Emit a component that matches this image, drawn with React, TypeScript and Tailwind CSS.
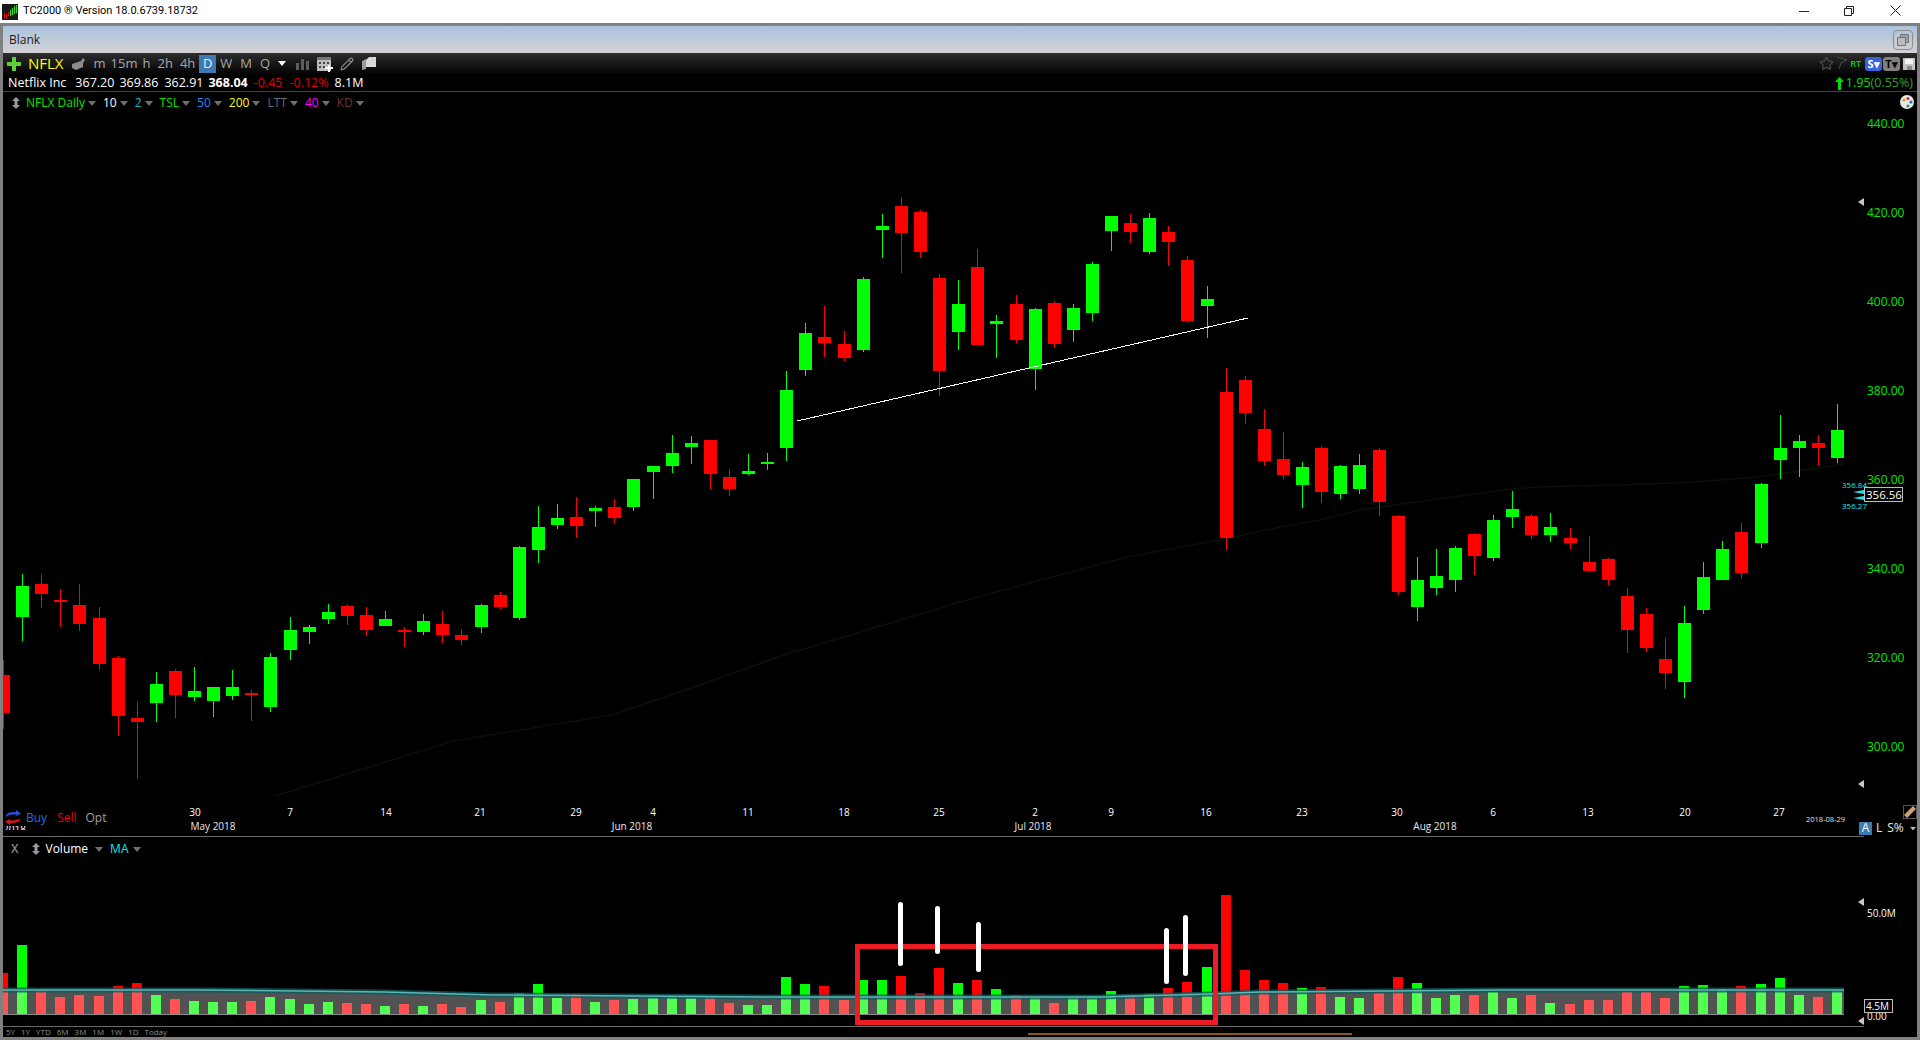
import * as React from "react";
import { Pencil, Star } from "lucide-react";

type Row = [string, number, number, number, number, number];
interface Candle {
    up: boolean;
    x: number;
    wickTop: number;
    bodyTop: number;
    bodyBottom: number;
    wickBottom: number;
}

// rows were read off 3x crops: [colour, x, wick top, body top, body bottom, wick bottom]
const groups: { ox: number; oy: number; rows: Row[] }[] = [
    {
        ox: 0,
        oy: 560,
        rows: [
            ["r", 10, 300, 345, 459, 507],
            ["g", 67, 42, 78, 171, 243],
            ["r", 124, 42, 72, 102, 144],
            ["r", 181, 87, 120, 126, 201],
            ["r", 238, 72, 135, 192, 213],
            ["r", 298, 141, 174, 312, 330],
            ["r", 355, 288, 294, 468, 528],
            ["r", 412, 426, 474, 486, 657],
            ["g", 469, 336, 372, 429, 486],
            ["r", 526, 327, 333, 405, 474],
            ["g", 583, 321, 393, 411, 423],
            ["g", 640, 381, 381, 423, 471],
            ["g", 697, 330, 381, 408, 420],
            ["r", 754, 390, 399, 405, 483],
            ["g", 811, 279, 291, 441, 456],
            ["g", 871, 171, 210, 270, 300],
            ["g", 928, 195, 201, 216, 252],
            ["g", 985, 132, 156, 177, 192],
            ["r", 1042, 132, 138, 168, 195],
            ["r", 1099, 141, 165, 210, 228],
            ["g", 1156, 153, 177, 198, 198],
            ["r", 1213, 201, 210, 216, 261],
            ["g", 1270, 162, 183, 216, 225],
            ["r", 1327, 153, 192, 225, 249],
            ["r", 1384, 207, 225, 240, 255],
            ["g", 1444, 132, 135, 201, 219],
            ["r", 1501, 96, 105, 141, 147],
        ],
    },
    {
        ox: 480,
        oy: 340,
        rows: [
            ["g", 118, 618, 621, 834, 840],
            ["g", 175, 498, 561, 630, 669],
            ["g", 232, 492, 534, 555, 567],
            ["r", 289, 471, 531, 558, 594],
            ["g", 346, 498, 504, 513, 561],
            ["r", 403, 477, 501, 534, 549],
            ["g", 460, 417, 417, 501, 513],
            ["g", 520, 378, 378, 396, 477],
            ["g", 577, 285, 339, 378, 399],
            ["g", 634, 288, 309, 321, 372],
            ["r", 691, 300, 300, 402, 447],
            ["r", 748, 387, 411, 447, 468],
            ["g", 805, 342, 393, 402, 405],
            ["g", 862, 339, 366, 372, 390],
            ["g", 919, 93, 150, 324, 363],
        ],
    },
    {
        ox: 780,
        oy: 180,
        rows: [
            ["g", 76, 429, 459, 570, 588],
            ["r", 133, 378, 471, 489, 531],
            ["r", 193, 453, 492, 534, 543],
            ["g", 250, 291, 297, 510, 516],
            ["g", 307, 102, 138, 150, 234],
            ["r", 364, 51, 78, 159, 279],
            ["r", 421, 90, 96, 216, 234],
            ["r", 478, 282, 294, 573, 648],
            ["g", 535, 300, 372, 456, 510],
            ["r", 592, 207, 261, 495, 495],
            ["g", 649, 405, 423, 432, 534],
            ["r", 709, 345, 372, 480, 489],
            ["g", 766, 384, 387, 567, 630],
            ["r", 823, 363, 369, 492, 504],
            ["g", 880, 372, 384, 450, 486],
            ["g", 937, 246, 252, 399, 423],
            ["g", 994, 108, 108, 153, 213],
            ["r", 1051, 102, 129, 156, 189],
            ["g", 1108, 99, 114, 216, 222],
            ["r", 1165, 138, 156, 186, 258],
            ["r", 1222, 228, 240, 423, 429],
            ["g", 1282, 318, 357, 378, 474],
        ],
    },
    {
        ox: 1220,
        oy: 380,
        rows: [
            ["r", 19, -36, 36, 473, 510],
            ["r", 76, -12, 0, 99, 132],
            ["r", 133, 87, 147, 243, 258],
            ["r", 190, 156, 237, 285, 297],
            ["g", 247, 246, 261, 315, 384],
            ["r", 304, 198, 204, 336, 369],
            ["g", 361, 255, 258, 342, 357],
            ["g", 418, 222, 255, 327, 342],
            ["r", 478, 204, 210, 366, 408],
            ["r", 535, 405, 408, 636, 645],
            ["g", 592, 531, 600, 681, 723],
            ["g", 649, 507, 588, 624, 645],
            ["g", 706, 498, 504, 600, 636],
            ["r", 763, 459, 462, 528, 585],
            ["g", 820, 405, 420, 534, 543],
            ["g", 877, 333, 387, 411, 444],
            ["r", 934, 402, 408, 465, 477],
            ["g", 991, 399, 441, 465, 486],
            ["r", 1051, 444, 474, 489, 507],
            ["r", 1108, 468, 546, 573, 576],
            ["r", 1165, 534, 537, 600, 615],
        ],
    },
    {
        ox: 1560,
        oy: 400,
        rows: [
            ["r", 202, 564, 588, 690, 759],
            ["r", 259, 624, 642, 744, 756],
            ["r", 316, 714, 777, 819, 867],
            ["g", 373, 618, 669, 846, 894],
            ["g", 430, 486, 531, 630, 642],
            ["g", 487, 423, 447, 540, 540],
            ["r", 544, 369, 396, 519, 537],
            ["g", 604, 249, 252, 429, 444],
            ["g", 661, 45, 144, 180, 237],
            ["g", 718, 105, 123, 144, 231],
            ["r", 775, 105, 129, 144, 198],
            ["g", 832, 12, 90, 174, 189],
        ],
    },
];

const candles: Candle[] = groups.flatMap((g) =>
    g.rows.map(([c, z, wt, bt, bb, wb]) => ({
        up: c === "g",
        x: g.ox + Math.floor(z / 3),
        wickTop: g.oy + Math.round(wt / 3),
        bodyTop: g.oy + Math.round(bt / 3),
        bodyBottom: g.oy + Math.round(bb / 3),
        wickBottom: g.oy + Math.round(wb / 3),
    })),
);

// top of each volume bar, one per candle, base is y=1015
const volumeTops = [
    973, 945, 991, 997, 995, 996, 986, 983, 995, 999, 1001, 1002, 1002, 1001, 997, 999, 1004, 1002, 1003, 1004, 1006,
    1004, 1006, 1004, 1007, 1000, 1002, 993, 984, 998, 994, 1002, 1000, 999, 998, 997, 998, 997, 1003, 1005, 1005, 977,
    984, 986, 1000, 980, 980, 976, 993, 968, 983, 980, 989, 995, 997, 1003, 997, 996, 991, 995, 994, 988, 982, 967, 895,
    970, 980, 983, 988, 987, 997, 998, 993, 977, 983, 998, 995, 995, 992, 998, 995, 1003, 1004, 1000, 1000, 992, 992,
    998, 986, 985, 989, 986, 984, 978, 995, 997, 991,
];

const priceLabels = [
    ["440.00", 128],
    ["420.00", 217],
    ["400.00", 306],
    ["380.00", 395],
    ["360.00", 484],
    ["340.00", 573],
    ["320.00", 662],
    ["300.00", 751],
] as const;

const dayLabels = [
    ["30", 195],
    ["7", 290],
    ["14", 386],
    ["21", 480],
    ["29", 576],
    ["4", 653],
    ["11", 748],
    ["18", 844],
    ["25", 939],
    ["2", 1035],
    ["9", 1111],
    ["16", 1206],
    ["23", 1302],
    ["30", 1397],
    ["6", 1493],
    ["13", 1588],
    ["20", 1685],
    ["27", 1779],
] as const;

const monthLabels = [
    ["May 2018", 213],
    ["Jun 2018", 632],
    ["Jul 2018", 1033],
    ["Aug 2018", 1435],
] as const;

const maLine =
    "M3 990 L200 990 L384 992 L493 995 L768 997 L1100 997 L1210 994 L1260 992 L1500 990 L1844 990";

const longMa =
    "M275 796 L360 770 L453 741 L612 715 L700 685 L784 655 L967 600 L1127 557 L1224 539 L1280 527 L1320 520 L1360 510 L1387 506 L1453 497 L1503 490 L1537 487 L1620 485 L1693 482 L1760 477 L1843 464";

const markers = [
    [898, 902, 64],
    [935, 906, 48],
    [976, 922, 50],
    [1164, 928, 56],
    [1183, 915, 61],
];

const Caret = ({ className = "" }: { className?: string }) => (
    <svg width="8" height="5" viewBox="0 0 8 5" className={className}>
        <path d="M0 0H8L4 5Z" fill="currentColor" />
    </svg>
);

const UpDown = () => (
    <svg width="8" height="12" viewBox="0 0 8 12">
        <path d="M4 0L8 4H5.5V8H8L4 12L0 8H2.5V4H0Z" fill="#9a9a9a" />
    </svg>
);

const LegendItem = ({ label, color }: { label: string; color: string }) => (
    <div className="flex items-center gap-[3px]">
        <span className={color}>{label}</span>
        <Caret className="text-[#6f6f6f]" />
    </div>
);

const PriceChart = () => (
    <svg viewBox="3 92 1914 745" width="1914" height="745" className="block">
        <path d={longMa} fill="none" stroke="#051405" strokeWidth="1.5" />
        {candles.map((c, i) => {
            const color = c.up ? "#00ff00" : "#ff0000";
            return (
                <g key={i} fill={color} shapeRendering="crispEdges">
                    <rect x={c.x} y={c.wickTop} width="1" height={c.wickBottom - c.wickTop} />
                    <rect x={c.x - 6} y={c.bodyTop} width="13" height={c.bodyBottom - c.bodyTop} />
                </g>
            );
        })}
        <line x1="797" y1="421" x2="1248" y2="318" stroke="#fff" strokeWidth="1" shapeRendering="crispEdges" />

        {priceLabels.map(([t, y]) => (
            <text key={t} x="1867" y={y} fontSize="12" fill="#00e800">
                {t}
            </text>
        ))}
        <path d="M1858 202l6-4v8Z M1858 784l6-4v8Z" fill="#c8c8c8" />

        <path d="M1853 492L1864 490V494Z M1853 498L1864 496V500Z" fill="#19e6f0" />
        <text x="1842" y="488" fontSize="8" fill="#19e6f0">
            356.84
        </text>
        <text x="1842" y="509" fontSize="8" fill="#19e6f0">
            356.27
        </text>
        <rect x="1864.5" y="487.5" width="38" height="14" fill="#000" stroke="#bdbdbd" />
        <text x="1866" y="499" fontSize="11.5" fill="#fff">
            356.56
        </text>

        {dayLabels.map(([t, x]) => (
            <text key={`${t}-${x}`} x={x} y="816" fontSize="10" fill="#fff" textAnchor="middle">
                {t}
            </text>
        ))}
        {monthLabels.map(([t, x]) => (
            <text key={t} x={x} y="830" fontSize="10" fill="#e8e8e8" textAnchor="middle">
                {t}
            </text>
        ))}
        <clipPath id="year-clip">
            <rect x="3" y="826" width="30" height="4" />
        </clipPath>
        <text x="3" y="833" fontSize="10" fill="#fff" clipPath="url(#year-clip)">
            2018
        </text>
        <text x="1806" y="822" fontSize="7.5" fill="#d8e4f0">
            2018-08-29
        </text>
        <rect x="3" y="836" width="1861" height="1" fill="#6a6a6a" shapeRendering="crispEdges" />
    </svg>
);

const VolumeChart = () => (
    <svg viewBox="3 837 1914 190" width="1914" height="190" className="block">
        {candles.map((c, i) => (
            <rect
                key={i}
                x={c.x - 5}
                y={volumeTops[i]}
                width="10"
                height={1015 - volumeTops[i]}
                fill={c.up ? "#00ff00" : "#ff0000"}
                shapeRendering="crispEdges"
            />
        ))}
        <path d={`${maLine} L1844 1015 L3 1015 Z`} fill="#fff" fillOpacity="0.32" />
        <path d={maLine} fill="none" stroke="#0f5a5c" strokeWidth="5" strokeOpacity="0.8" />
        <path d={maLine} fill="none" stroke="#5fb4b4" strokeWidth="1.5" />
        <rect x="3" y="1014" width="1841" height="1" fill="#8a8a8a" shapeRendering="crispEdges" />

        <rect x="857.5" y="946.5" width="358" height="76" fill="none" stroke="#ed1c24" strokeWidth="5" />
        {markers.map(([x, y, h]) => (
            <rect key={x} x={x} y={y} width="5" height={h} rx="2.5" fill="#fff" />
        ))}

        <path d="M1858 902l6-4v8Z M1858 1021l6-4v8Z" fill="#c8c8c8" />
        <text x="1867" y="917" fontSize="10" fill="#fff">
            50.0M
        </text>
        <text x="1867" y="1020" fontSize="10" fill="#fff">
            0.00
        </text>
        <rect x="1864.5" y="999.5" width="28" height="13" fill="#000" stroke="#bdbdbd" />
        <text x="1866" y="1010" fontSize="10" fill="#fff">
            4.5M
        </text>
        <rect x="3" y="1026" width="1861" height="1" fill="#6a6a6a" shapeRendering="crispEdges" />
    </svg>
);

export default function App() {
    return (
        <div className="w-[1920px] h-[1040px] overflow-hidden flex flex-col bg-[#808080] font-['Open_Sans','Noto_Sans',sans-serif]">
            {/* window title */}
            <div className="h-[23px] bg-white flex items-center relative">
                <svg width="16" height="16" viewBox="0 0 16 16" className="ml-[2px]">
                    <rect width="16" height="16" fill="#1a1a1a" />
                    <path d="M2 9h1v5H2Z M4 10h1v5H4Z M6 8h1v4H6Z" fill="#e01010" />
                    <path d="M8 6h1v6H8Z M10 4h1v7h-1Z M12 2h1v8h-1Z M14 1h1v8h-1Z" fill="#30e030" />
                </svg>
                <span className="ml-[5px] text-[11px] text-black font-['Roboto',sans-serif]">
                    TC2000 ® Version 18.0.6739.18732
                </span>
                <div className="ml-auto flex items-center pb-[2px]">
                    <svg width="10" height="10" viewBox="0 0 10 10" className="mr-[35px]">
                        <path d="M0 5.5H10" stroke="#222" />
                    </svg>
                    <svg width="10" height="10" viewBox="0 0 10 10" className="mr-[36px]">
                        <path d="M0.5 2.5H7.5V9.5H0.5Z M2.5 2.5V0.5H9.5V7.5H7.5" fill="none" stroke="#222" />
                    </svg>
                    <svg width="11" height="11" viewBox="0 0 11 11" className="mr-[19px]">
                        <path d="M0.5 0.5L10.5 10.5M10.5 0.5L0.5 10.5" stroke="#222" />
                    </svg>
                </div>
            </div>

            <div className="flex-1 mx-[3px] my-[3px] flex flex-col bg-black min-h-0">
                {/* tab strip */}
                <div className="h-[27px] bg-gradient-to-b from-[#abc2de] to-[#d2d2d2] flex items-center pl-[6px] pr-[4px] text-[12px] text-[#1a1a1a]">
                    <span>Blank</span>
                    <div className="ml-auto w-[20px] h-[20px] rounded-[4px] border border-[#8c8c8c] flex items-center justify-center">
                        <svg width="12" height="12" viewBox="0 0 12 12">
                            <path d="M3.5 0.5H11.5V8.5H8.5V3.5H3.5Z" fill="#a0a0a0" stroke="#777" />
                            <path d="M0.5 3.5H8.5V11.5H0.5Z" fill="#bbb" stroke="#777" />
                        </svg>
                    </div>
                </div>

                {/* toolbar */}
                <div className="h-[21px] bg-gradient-to-b from-[#2e2e2e] to-[#050505] flex items-center text-[13px] text-[#a8a8a8] relative">
                    <svg width="14" height="14" viewBox="0 0 14 14" className="ml-[4px]">
                        <path d="M5 0H9V5H14V9H9V14H5V9H0V5H5Z" fill="#5fd03c" />
                    </svg>
                    <span className="ml-[7px] text-[15px] text-[#ffff00] leading-none">NFLX</span>
                    <svg width="14" height="12" viewBox="0 0 14 12" className="ml-[7px]">
                        <path d="M1 6L10 3L12 0L14 2L12 5V9L5 12L1 10Z" fill="#8c8c8c" />
                    </svg>
                    <span className="ml-[9px]">m</span>
                    <span className="ml-[5px]">15m</span>
                    <span className="ml-[5px]">h</span>
                    <span className="ml-[7px]">2h</span>
                    <span className="ml-[7px]">4h</span>
                    <span className="ml-[4px] w-[17px] h-[18px] bg-[#3d79b3] text-[#e8eef5] flex items-center justify-center">
                        D
                    </span>
                    <span className="ml-[4px]">W</span>
                    <span className="ml-[8px]">M</span>
                    <span className="ml-[8px]">Q</span>
                    <Caret className="ml-[8px] text-white" />
                    <svg width="14" height="12" viewBox="0 0 14 12" className="ml-[10px]">
                        <path d="M0 5h3v7H0Z M5 1h3v11H5Z M10 3h3v9h-3Z" fill="#5c5c5c" />
                    </svg>
                    <svg width="16" height="16" viewBox="0 0 16 16" className="ml-[7px]">
                        <path d="M0 1H14V15H0Z" fill="#bdbdbd" />
                        <path d="M0 1H14V4H0Z" fill="#777" />
                        <path d="M2 6h2v2H2Z M6 6h2v2H6Z M10 6h2v2h-2Z M2 10h2v2H2Z M6 10h2v2H6Z" fill="#444" />
                        <path d="M11 9h2v2h3v2h-3v3h-2v-3H8v-2h3Z" fill="#fff" />
                    </svg>
                    <Pencil size={14} className="ml-[7px] text-[#8a8a8a]" />
                    <svg width="14" height="13" viewBox="0 0 14 13" className="ml-[8px]">
                        <path d="M0 4L4 2V12L0 13Z" fill="#999" />
                        <path d="M4 3L7 0H14V10H4Z" fill="#d8d8d8" />
                    </svg>

                    <div className="ml-auto flex items-center mr-[2px]">
                        <Star size={15} className="text-[#4a4a4a]" />
                        <svg width="12" height="13" viewBox="0 0 12 13" className="ml-[2px]">
                            <path d="M1 0L11 3L5 6L3 12" fill="none" stroke="#4a4a4a" />
                        </svg>
                        <span className="ml-[2px] text-[9px] font-semibold text-[#00d000]">RT</span>
                        <span className="ml-[4px] w-[17px] h-[14px] rounded-[3px] bg-[#3c63dc] text-white text-[11px] font-bold flex items-center justify-center leading-none">
                            S▾
                        </span>
                        <span className="ml-[1px] w-[17px] h-[14px] rounded-[3px] bg-[#808080] text-black text-[11px] font-bold flex items-center justify-center leading-none">
                            T▾
                        </span>
                        <svg width="12" height="12" viewBox="0 0 12 12" className="ml-[3px]">
                            <path d="M0 0H12V12H0Z" fill="#c4c4c4" />
                            <path d="M2 1H10V6H2Z" fill="#f0f0f0" />
                            <path d="M4 8H9V12H4Z" fill="#8a8a8a" />
                        </svg>
                    </div>
                </div>

                {/* quote line */}
                <div className="h-[18px] pt-[2px] border-b border-[#444] bg-black flex items-center text-[12.5px] text-white">
                    <span className="ml-[5px]">Netflix Inc</span>
                    <span className="ml-[9px]">367.20</span>
                    <span className="ml-[5px]">369.86</span>
                    <span className="ml-[6px]">362.91</span>
                    <span className="ml-[5px] font-bold">368.04</span>
                    <span className="ml-[6px] text-[#e00000]">-0.45</span>
                    <span className="ml-[7px] text-[#e00000]">-0.12%</span>
                    <span className="ml-[6px]">8.1M</span>
                    <div className="ml-auto mr-[4px] flex items-center text-[#00e000]">
                        <svg width="9" height="13" viewBox="0 0 9 13">
                            <path d="M4.5 0L9 5H6V13H3V5H0Z" fill="#00e000" />
                        </svg>
                        <span className="ml-[2px]">1.95</span>
                        <span className="text-[#2fa52f]">(0.55%)</span>
                    </div>
                </div>

                {/* price pane */}
                <div className="relative h-[745px] shrink-0">
                    <PriceChart />
                    <div className="absolute left-[9px] top-[4px] flex items-center text-[12px] leading-[14px]">
                        <UpDown />
                        <div className="ml-[6px] flex items-center gap-[7px]">
                            <LegendItem label="NFLX Daily" color="text-[#00e800]" />
                            <LegendItem label="10" color="text-white" />
                            <LegendItem label="2" color="text-[#1fb0d4]" />
                            <LegendItem label="TSL" color="text-[#00e000]" />
                            <LegendItem label="50" color="text-[#2288ff]" />
                            <LegendItem label="200" color="text-[#ffff00]" />
                            <LegendItem label="LTT" color="text-[#656d78]" />
                            <LegendItem label="40" color="text-[#ff00ff]" />
                            <LegendItem label="KD" color="text-[#703434]" />
                        </div>
                    </div>
                    <svg width="14" height="14" viewBox="0 0 14 14" className="absolute left-[1897px] top-[3px]">
                        <circle cx="7" cy="7" r="7" fill="#e8e8e8" />
                        <circle cx="4" cy="5" r="1.6" fill="#e0a020" />
                        <circle cx="8" cy="3.5" r="1.6" fill="#d03030" />
                        <circle cx="11" cy="7" r="1.6" fill="#3060d0" />
                        <circle cx="8" cy="11" r="1.6" fill="#30a040" />
                    </svg>
                    <div className="absolute left-[2px] top-[718px] flex items-center text-[12px] leading-[14px]">
                        <svg width="16" height="15" viewBox="0 0 16 15">
                            <path d="M1 7C1 3 4 2 11 2V0L16 3.5L11 6V4.5C6 4.5 3 5 1 7Z" fill="#2050d8" />
                            <path d="M15 8C15 12 12 13 5 13V15L0 11.5L5 9V10.5C10 10.5 13 10 15 8Z" fill="#e01010" />
                        </svg>
                        <span className="ml-[5px] text-[#1f6fe6]">Buy</span>
                        <span className="ml-[10px] text-[#e80000]">Sell</span>
                        <span className="ml-[9px] text-[#a0a0a0]">Opt</span>
                    </div>
                    <div className="absolute left-[1856px] top-[729px] flex items-center text-[12px] leading-[14px] text-[#e8e8e8]">
                        <span className="w-[13px] h-[13px] bg-[#3d79b3] text-white flex items-center justify-center">
                            A
                        </span>
                        <span className="ml-[4px]">L</span>
                        <span className="ml-[5px]">S%</span>
                        <Caret className="ml-[5px] scale-75 text-[#bbb]" />
                    </div>
                    <div className="absolute left-[1900px] top-[713px] w-[14px] h-[14px] border border-[#555] flex items-center justify-center">
                        <svg width="12" height="12" viewBox="0 0 12 12">
                            <path d="M0 9L9 0L12 3L3 12Z" fill="#cfa071" />
                        </svg>
                    </div>
                </div>

                {/* volume pane */}
                <div className="relative h-[190px] shrink-0">
                    <VolumeChart />
                    <div className="absolute left-[8px] top-[5px] flex items-center text-[12px] leading-[14px]">
                        <span className="text-[#8a8a8a] font-semibold">X</span>
                        <div className="ml-[14px]">
                            <UpDown />
                        </div>
                        <span className="ml-[5px] text-white">Volume</span>
                        <Caret className="ml-[7px] text-[#6f6f6f]" />
                        <span className="ml-[7px] text-[#19e6e6]">MA</span>
                        <Caret className="ml-[5px] text-[#6f6f6f]" />
                    </div>
                </div>

                {/* date range strip */}
                <div className="relative h-[10px] shrink-0 flex items-center text-[8px] leading-none text-[#8f8f8f] pl-[3px] pb-[1px] gap-[6px]">
                    <span>5Y</span>
                    <span>1Y</span>
                    <span>YTD</span>
                    <span>6M</span>
                    <span>3M</span>
                    <span>1M</span>
                    <span>1W</span>
                    <span>1D</span>
                    <span>Today</span>
                    <div className="absolute left-[1025px] top-[6px] w-[324px] h-[2px] bg-[#8a5a10]" />
                </div>
            </div>
        </div>
    );
}
